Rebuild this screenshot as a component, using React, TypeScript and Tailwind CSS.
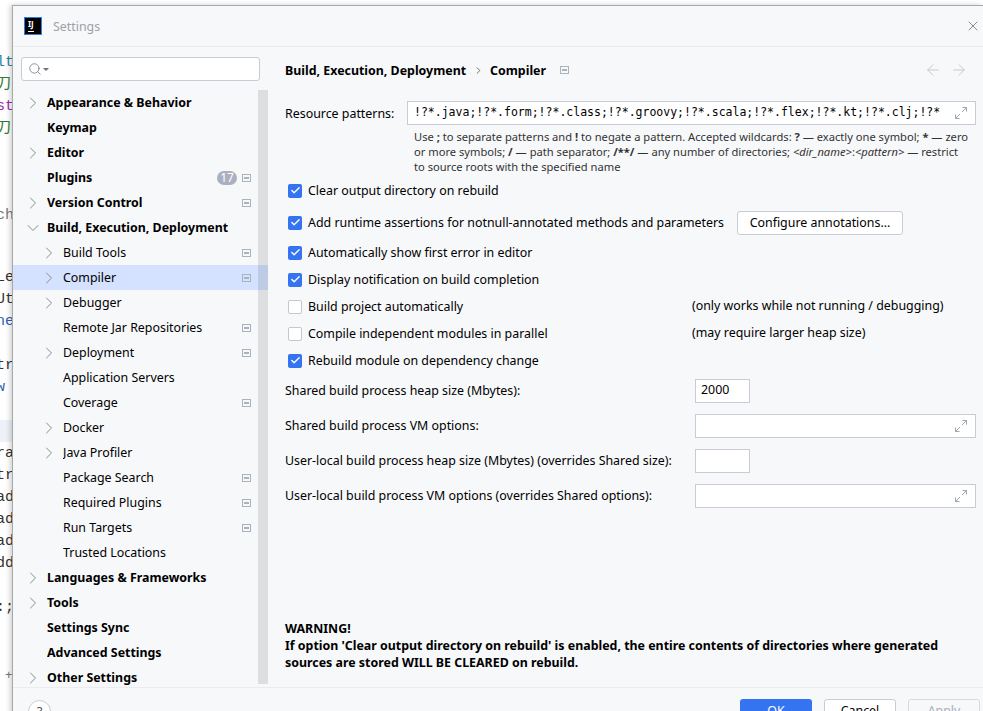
import { ChevronRight, ChevronDown, ArrowLeft, ArrowRight, Check, X, Search } from "lucide-react";

const FONT = "font-['Noto_Sans','Noto_Sans_CJK_SC',sans-serif]";

type Row = { label: string; level: 0 | 1; arrow?: "right" | "down"; mark?: boolean; badge?: string; active?: boolean };

const rows: Row[] = [
  { label: "Appearance & Behavior", level: 0, arrow: "right" },
  { label: "Keymap", level: 0 },
  { label: "Editor", level: 0, arrow: "right" },
  { label: "Plugins", level: 0, mark: true, badge: "17" },
  { label: "Version Control", level: 0, arrow: "right", mark: true },
  { label: "Build, Execution, Deployment", level: 0, arrow: "down" },
  { label: "Build Tools", level: 1, arrow: "right", mark: true },
  { label: "Compiler", level: 1, arrow: "right", mark: true, active: true },
  { label: "Debugger", level: 1, arrow: "right" },
  { label: "Remote Jar Repositories", level: 1, mark: true },
  { label: "Deployment", level: 1, arrow: "right", mark: true },
  { label: "Application Servers", level: 1 },
  { label: "Coverage", level: 1, mark: true },
  { label: "Docker", level: 1, arrow: "right" },
  { label: "Java Profiler", level: 1, arrow: "right" },
  { label: "Package Search", level: 1, mark: true },
  { label: "Required Plugins", level: 1, mark: true },
  { label: "Run Targets", level: 1, mark: true },
  { label: "Trusted Locations", level: 1 },
  { label: "Languages & Frameworks", level: 0, arrow: "right" },
  { label: "Tools", level: 0, arrow: "right" },
  { label: "Settings Sync", level: 0 },
  { label: "Advanced Settings", level: 0 },
  { label: "Other Settings", level: 0, arrow: "right" },
];

const codeBits = [
  { top: "top-[52px]", text: "lt", color: "text-[#2f7f9f]" },
  { top: "top-[74px]", text: "刀タ", color: "text-[#2e7d32]" },
  { top: "top-[96px]", text: "st", color: "text-[#9c27b0]" },
  { top: "top-[118px]", text: "刀タ", color: "text-[#2e7d32]" },
  { top: "top-[205px]", text: "ch", color: "text-[#777777]" },
  { top: "top-[267px]", text: "Le", color: "text-[#333333]" },
  { top: "top-[289px]", text: "Ut", color: "text-[#333333]" },
  { top: "top-[311px]", text: "ne", color: "text-[#2f5fb0]" },
  { top: "top-[355px]", text: "tr", color: "text-[#333333]" },
  { top: "top-[377px]", text: "w", color: "text-[#2f5fb0]" },
  { top: "top-[443px]", text: "ra", color: "text-[#333333]" },
  { top: "top-[465px]", text: "tr", color: "text-[#333333]" },
  { top: "top-[487px]", text: "ad", color: "text-[#333333]" },
  { top: "top-[509px]", text: "ad", color: "text-[#333333]" },
  { top: "top-[531px]", text: "ad", color: "text-[#333333]" },
  { top: "top-[553px]", text: "dd", color: "text-[#333333]" },
  { top: "top-[597px]", text: ":;", color: "text-[#333333]" },
];

function ProjectMark({ className = "" }: { className?: string }) {
  return (
    <svg width="9" height="8" viewBox="0 0 9 8" className={`shrink-0 ${className}`}>
      <rect x="0.5" y="0.5" width="8" height="7" fill="none" stroke="#a8b3bd" />
      <rect x="2" y="3" width="5" height="2" fill="#a8b3bd" />
    </svg>
  );
}

function Expand() {
  return (
    <svg width="14" height="14" viewBox="0 0 14 14" fill="none" stroke="#9aa7b0" strokeWidth="1" className="mr-[2px] shrink-0">
      <path d="M8 6 L12.5 1.5 M8.5 1.5 H12.5 V5.5" />
      <path d="M6 8 L1.5 12.5 M1.5 8.5 V12.5 H5.5" />
    </svg>
  );
}

function TreeRow({ row }: { row: Row }) {
  return (
    <div className={`flex h-[25px] items-center pr-[17px] ${row.active ? "bg-[#d4e2ff]" : ""} ${row.level === 1 ? "pl-[26px]" : "pl-[10px]"}`}>
      <span className="flex w-[24px] shrink-0 items-center">
        {row.arrow === "right" && <ChevronRight size={20} strokeWidth={1.2} className="text-[#8c8c8c]" />}
        {row.arrow === "down" && <ChevronDown size={20} strokeWidth={1.2} className="text-[#8c8c8c]" />}
      </span>
      <span className={`flex-1 truncate pt-[2px] text-[12.4px] text-black ${row.level === 0 ? "font-bold" : ""}`}>{row.label}</span>
      {row.badge && (
        <span className="mr-[5px] flex h-[14px] w-[20px] items-center justify-center rounded-full bg-[#abb0c0] text-[12px] text-white">{row.badge}</span>
      )}
      {row.mark && <ProjectMark />}
    </div>
  );
}

function CheckRow({ label, checked, note, children }: { label: string; checked?: boolean; note?: string; children?: React.ReactNode }) {
  return (
    <div className="flex h-[27px] items-center">
      <span className={`mr-[6px] flex h-[14px] w-[14px] shrink-0 items-center justify-center rounded-[2px] ${checked ? "bg-[#3574f0]" : "border border-[#c4c7ce] bg-white"}`}>
        {checked && <Check size={11} strokeWidth={3} className="text-white" />}
      </span>
      <span className={`pt-[2px] ${note ? "w-[384px]" : ""}`}>{label}</span>
      {note && <span>{note}</span>}
      {children}
    </div>
  );
}

function FieldRow({ label, value, wide }: { label: string; value?: string; wide?: boolean }) {
  return (
    <div className="flex h-[35px] items-center">
      <span className="w-[410px] shrink-0 pt-[2px]">{label}</span>
      <div className={`flex h-[24px] items-center justify-between border border-[#c9ccd6] bg-white px-[5px] ${wide ? "w-[281px]" : "w-[55px]"}`}>
        <span>{value}</span>
        {wide && <Expand />}
      </div>
    </div>
  );
}

export default function App() {
  return (
    <div className={`relative h-[711px] w-[983px] overflow-hidden bg-white ${FONT}`}>
      {/* editor peeking out behind the dialog */}
      {codeBits.map((c) => (
        <span key={c.top} className={`absolute -left-[4px] ${c.top} font-['Liberation_Mono','Noto_Sans_CJK_SC',monospace] text-[15px] ${c.color}`}>{c.text}</span>
      ))}
      <div className="absolute left-0 top-[420px] h-[22px] w-[13px] bg-[#eef1f8]" />
      <span className="absolute left-[5px] top-[665px] text-[13px] text-[#777777]">+</span>

      <div className="absolute left-[12px] top-[5px] flex h-[720px] w-[971px] flex-col border-l border-t border-[#a8a8a8] bg-[#f7f8fa] shadow-[-2px_0_5px_rgba(0,0,0,0.18)]">
        {/* Title bar */}
        <div className="flex h-[41px] shrink-0 items-center border-b border-[#ebecf0] pl-[12px] pr-[2px]">
          <span className="flex h-[16px] w-[16px] flex-col justify-between bg-black px-[3px] pb-[2px] pt-[1px] text-[8px] font-bold leading-[9px] text-white outline outline-1 outline-[#2f7fe0]">
            IJ
            <span className="block h-[1px] w-[6px] bg-white" />
          </span>
          <span className="ml-[12px] flex-1 pt-[2px] text-[12.4px] text-[#9ea1a8]">Settings</span>
          <X size={16} strokeWidth={1.2} className="text-[#6c707e]" />
        </div>

        {/* Body */}
        <div className="flex h-[640px] shrink-0">
          {/* Sidebar */}
          <div className="flex w-[255px] shrink-0 flex-col">
            <div className="ml-[8px] mt-[10px] flex h-[24px] w-[239px] shrink-0 items-center rounded-[3px] border border-[#c9ccd6] bg-white pl-[6px]">
              <Search size={14} strokeWidth={1.3} className="text-[#6c707e]" />
              <span className="ml-[1px] h-0 w-0 border-x-[3px] border-t-[3px] border-x-transparent border-t-[#6c707e]" />
            </div>
            <div className="relative mt-[9px] min-h-0 flex-1">
              <div className="absolute right-0 top-0 h-[594px] w-[10px] bg-[#000000]/10" />
              <div className="h-[597px] overflow-hidden">
                {rows.map((r) => (
                  <TreeRow key={r.label} row={r} />
                ))}
              </div>
            </div>
          </div>

          {/* Content */}
          <div className="flex min-w-0 flex-1 flex-col pl-[17px] pr-[7px] text-[12.4px] text-black">
            <div className="flex h-[46px] shrink-0 items-center font-bold">
              <span className="pt-[2px]">Build, Execution, Deployment</span>
              <ChevronRight size={11} strokeWidth={1.5} className="mx-[6.5px] text-[#333333]" />
              <span className="pt-[2px]">Compiler</span>
              <ProjectMark className="ml-[14px]" />
              <span className="ml-auto flex gap-[8px] pr-[8px] text-[#c2c5cc]">
                <ArrowLeft size={18} strokeWidth={1.2} />
                <ArrowRight size={18} strokeWidth={1.2} />
              </span>
            </div>

            <div className="mt-[8px] flex items-center">
              <span className="w-[122px] shrink-0 pt-[2px]">Resource patterns:</span>
              <div className="flex h-[24px] min-w-0 flex-1 items-center justify-between border border-[#c9ccd6] bg-white pl-[6px] pr-[5px]">
                <span className="overflow-hidden whitespace-nowrap font-['DejaVu_Sans_Mono',monospace] text-[11.5px]">!?*.java;!?*.form;!?*.class;!?*.groovy;!?*.scala;!?*.flex;!?*.kt;!?*.clj;!?*</span>
                <Expand />
              </div>
            </div>

            <p className="ml-[129px] mr-[6px] mt-[4px] text-[11.15px] leading-[15px] text-[#333333]">
              Use <b>;</b> to separate patterns and <b>!</b> to negate a pattern. Accepted wildcards: <b>?</b> — exactly one symbol; <b>*</b> — zero or more symbols; <b>/</b> — path separator; <b>/**/</b> — any number of directories; <i>&lt;dir_name&gt;</i>:<i>&lt;pattern&gt;</i> — restrict to source roots with the specified name
            </p>

            <div className="mt-[3px] ml-[3px]">
              <CheckRow label="Clear output directory on rebuild" checked />
              <div className="h-[5px]" />
              <CheckRow label="Add runtime assertions for notnull-annotated methods and parameters" checked>
                <button className="ml-[13px] h-[24px] w-[166px] rounded-[3px] border border-[#c9ccd6] bg-white pt-[1px] text-[12.4px]">Configure annotations...</button>
              </CheckRow>
              <div className="h-[3px]" />
              <CheckRow label="Automatically show first error in editor" checked />
              <CheckRow label="Display notification on build completion" checked />
              <CheckRow label="Build project automatically" note="(only works while not running / debugging)" />
              <CheckRow label="Compile independent modules in parallel" note="(may require larger heap size)" />
              <CheckRow label="Rebuild module on dependency change" checked />
            </div>

            <div className="-mt-[1px]">
              <FieldRow label="Shared build process heap size (Mbytes):" value="2000" />
              <FieldRow label="Shared build process VM options:" wide />
              <FieldRow label="User-local build process heap size (Mbytes) (overrides Shared size):" />
              <FieldRow label="User-local build process VM options (overrides Shared options):" wide />
            </div>

            <p className="mt-auto mb-[16px] text-[12.4px] font-bold leading-[17px]">
              WARNING!<br />
              If option 'Clear output directory on rebuild' is enabled, the entire contents of directories where generated sources are stored WILL BE CLEARED on rebuild.
            </p>
          </div>
        </div>

        {/* Footer */}
        <div className="flex flex-1 items-start border-t border-[#ebecf0] pl-[15px] pr-[3px] pt-[11px]">
          <span className="mt-[1px] flex h-[23px] w-[23px] items-center justify-center rounded-full border border-[#c9ccd6] bg-white text-[13px] text-[#555555]">?</span>
          <div className="ml-auto flex gap-[12px] text-[12.4px]">
            <button className="h-[24px] w-[72px] rounded-[3px] bg-[#3574f0] text-white">OK</button>
            <button className="h-[24px] w-[72px] rounded-[3px] border border-[#c9ccd6] bg-white">Cancel</button>
            <button className="h-[24px] w-[72px] rounded-[3px] border border-[#d8dae0] bg-[#f7f8fa] text-[#a8adbd]">Apply</button>
          </div>
        </div>
      </div>
    </div>
  );
}
